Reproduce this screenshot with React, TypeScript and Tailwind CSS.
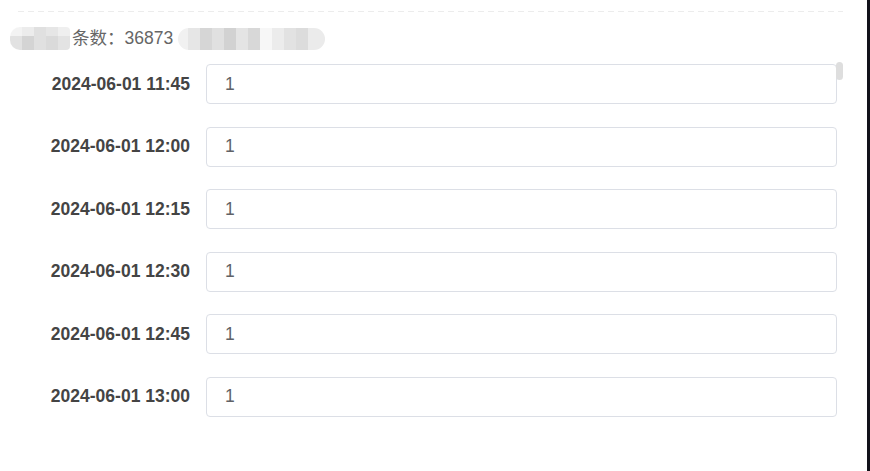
import React from "react";

const rows = [
  "2024-06-01 11:45",
  "2024-06-01 12:00",
  "2024-06-01 12:15",
  "2024-06-01 12:30",
  "2024-06-01 12:45",
  "2024-06-01 13:00",
];

// pixelated blur blocks that hide the masked text in the header
const BlurLeft = () => (
  <div className="flex h-[23px] w-[60px] overflow-hidden rounded-l-[10px] rounded-r-[4px]">
    <div className="w-[12px] bg-[linear-gradient(#f3f3f3_40%,#e2e2e2_40%)]" />
    <div className="w-[12px] bg-[linear-gradient(#ececec_40%,#d4d4d4_40%)]" />
    <div className="w-[12px] bg-[#e0e0e0]" />
    <div className="w-[12px] bg-[linear-gradient(#e6e6e6_40%,#dadada_40%)]" />
    <div className="w-[12px] bg-[linear-gradient(#efefef_40%,#e3e3e3_40%)]" />
  </div>
);

const BlurRight = () => (
  <div className="flex h-[22px] w-[147px] overflow-hidden rounded-full">
    <div className="w-[10px] bg-[#f1f1f1]" />
    <div className="w-[12px] bg-[#e6e6e6]" />
    <div className="w-[12px] bg-[#d6d6d6]" />
    <div className="w-[12px] bg-[#e0e0e0]" />
    <div className="w-[12px] bg-[#d2d2d2]" />
    <div className="w-[12px] bg-[#e4e4e4]" />
    <div className="w-[12px] bg-[#d8d8d8]" />
    <div className="w-[12px] bg-[#f7f7f7]" />
    <div className="w-[12px] bg-[#ececec]" />
    <div className="w-[12px] bg-[#e2e2e2]" />
    <div className="w-[12px] bg-[#dcdcdc]" />
    <div className="w-[17px] bg-[#ebebeb]" />
  </div>
);

export default function App() {
  return (
    <div className="flex h-[471px] w-[870px] overflow-hidden bg-white font-['Liberation_Sans',Arial,'Noto_Sans_CJK_SC',sans-serif]">
      <div className="relative flex-1">
        {/* dashed divider */}
        <div className="ml-[18px] mt-[11px] h-[1px] w-[825px] bg-[linear-gradient(to_right,#ececec_6px,transparent_6px)] bg-[length:10px_1px]" />

        {/* count line */}
        <div className="ml-[10px] mt-[15px] flex h-[23px] items-center text-[17.5px] text-[#666]">
          <BlurLeft />
          <span className="ml-[2px]">条数：36873</span>
          <div className="ml-[5px]">
            <BlurRight />
          </div>
        </div>

        {/* rows */}
        <div className="mt-[14px] flex flex-col gap-[22.5px]">
          {rows.map((t) => (
            <div key={t} className="flex items-center">
              <div className="w-[190px] text-right text-[17.5px] font-bold text-[#444]">
                {t}
              </div>
              <div className="ml-[16px] flex h-[40px] w-[631px] items-center rounded-[4px] border border-[#dcdfe6] px-[18px] text-[17.5px] text-[#606266]">
                1
              </div>
            </div>
          ))}
        </div>

        {/* scrollbar thumb */}
        <div className="absolute left-[836px] top-[62px] h-[18px] w-[7px] rounded-full bg-[#dedede]" />
      </div>
      <div className="w-[3px] bg-[#12121a]" />
    </div>
  );
}
